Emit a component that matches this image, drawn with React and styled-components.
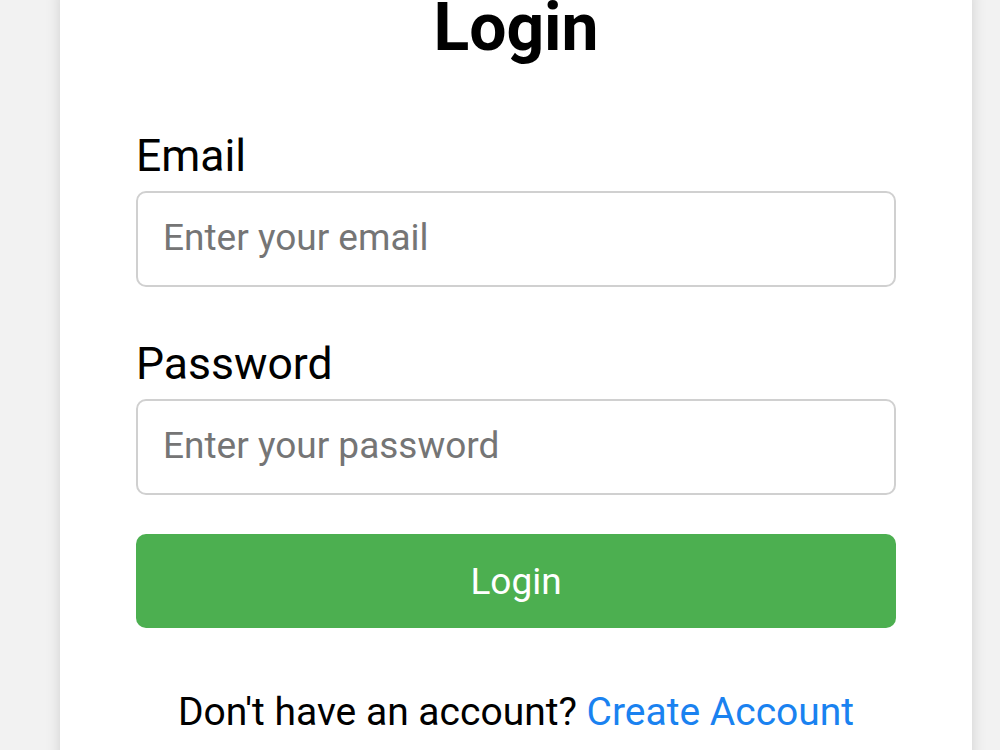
import React from "react";
import styled, { createGlobalStyle } from "styled-components";

const GlobalStyle = createGlobalStyle`
  html, body {
    margin: 0;
    padding: 0;
    height: 100%;
    overflow: hidden;
  }
  body {
    background: #f2f2f2;
    font-family: Roboto, "Noto Sans", sans-serif;
  }
  #root {
    height: 100%;
  }
`;

const Page = styled.div`
  height: 100%;
  display: flex;
  justify-content: center;
  align-items: flex-start;
`;

const Card = styled.div`
  width: 912px;
  box-sizing: border-box;
  margin-left: 32px;
  margin-top: -11px;
  padding: 0 76px 40px;
  background: #fff;
  box-shadow: 0 0 14px rgba(0, 0, 0, 0.14);
`;

const Title = styled.h1`
  margin: 0 0 64px;
  text-align: center;
  font-size: 66px;
  font-weight: 700;
  color: #000;
`;

const Field = styled.div`
  display: flex;
  flex-direction: column;
  margin-bottom: ${(p) => p.$gap || 0}px;
`;

const Label = styled.label`
  font-size: 44.5px;
  color: #000;
  margin-bottom: 9px;
`;

const Input = styled.input`
  height: 96px;
  box-sizing: border-box;
  border: 2px solid #d0d0d0;
  border-radius: 10px;
  padding: 0 25px 3px;
  font-family: Roboto, sans-serif;
  font-size: 37px;
  color: #000;
  outline: none;
  &::placeholder {
    color: #757575;
  }
`;

const Button = styled.button`
  width: 100%;
  height: 94px;
  border: none;
  border-radius: 10px;
  background: #4caf50;
  color: #fff;
  font-family: Roboto, sans-serif;
  font-size: 37px;
  cursor: pointer;
`;

const Footer = styled.p`
  margin: 61px 0 0;
  text-align: center;
  font-size: 39px;
  color: #000;
`;

const Link = styled.a`
  color: #1a82f0;
  text-decoration: none;
`;

export default function App() {
  return (
    <>
      <GlobalStyle />
      <Page>
        <Card>
          <Title>Login</Title>
          <Field $gap={51}>
            <Label>Email</Label>
            <Input type="email" placeholder="Enter your email" />
          </Field>
          <Field $gap={39}>
            <Label>Password</Label>
            <Input type="password" placeholder="Enter your password" />
          </Field>
          <Button>Login</Button>
          <Footer>
            Don't have an account? <Link href="#">Create Account</Link>
          </Footer>
        </Card>
      </Page>
    </>
  );
}
